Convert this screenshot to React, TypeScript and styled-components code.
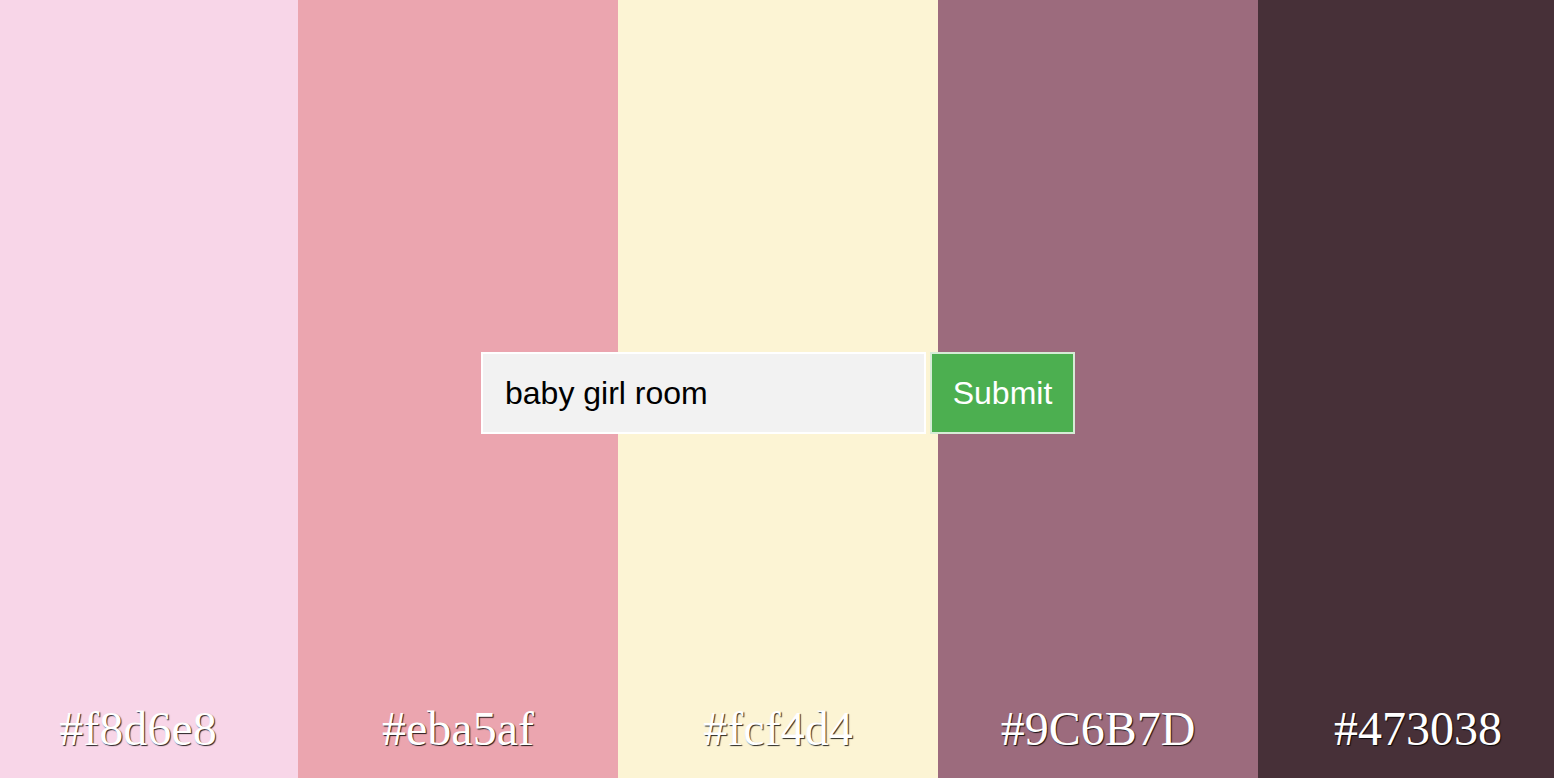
import React from "react";
import styled, { createGlobalStyle } from "styled-components";

const GlobalStyle = createGlobalStyle`
  html, body {
    margin: 0;
    padding: 0;
    overflow: hidden;
  }
  * { box-sizing: border-box; }
`;

const Page = styled.div`
  position: relative;
  width: 100vw;
  height: 100vh;
  overflow: hidden;
`;

const Palette = styled.div`
  display: flex;
  width: 1600px;
  height: 100%;
  margin-left: -22px;
`;

const Swatch = styled.div<{ $bg: string }>`
  flex: 0 0 320px;
  height: 100%;
  background: ${(p) => p.$bg};
  display: flex;
  flex-direction: column;
  justify-content: flex-end;
  align-items: center;
  padding-bottom: 22px;
`;

const Code = styled.span`
  font-family: "Liberation Serif", "Times New Roman", serif;
  font-size: 48px;
  color: #ffffff;
  text-shadow: 1px 1px 1px rgba(0, 0, 0, 0.85);
`;

const Overlay = styled.div`
  position: absolute;
  inset: 0;
  display: flex;
  justify-content: center;
  align-items: center;
  padding-top: 8px;
  padding-left: 2px;
  pointer-events: none;
`;

const SearchForm = styled.form`
  display: flex;
  gap: 4px;
  pointer-events: auto;
`;

const Input = styled.input`
  width: 445px;
  height: 82px;
  padding: 0 22px;
  border: 2px solid #ffffff;
  background: #f2f2f2;
  color: #000000;
  font-family: "Liberation Sans", Arial, sans-serif;
  font-size: 32px;
  outline: none;
`;

const Button = styled.button`
  width: 145px;
  height: 82px;
  padding: 0;
  border: 2px solid #d6ecd6;
  background: #4caf50;
  color: #ffffff;
  font-family: "Liberation Sans", Arial, sans-serif;
  font-size: 32px;
  cursor: pointer;
`;

const colors = ["#f8d6e8", "#eba5af", "#fcf4d4", "#9C6B7D", "#473038"];

export default function App() {
  return (
    <>
      <GlobalStyle />
      <Page>
        <Palette>
          {colors.map((c) => (
            <Swatch key={c} $bg={c}>
              <Code>{c}</Code>
            </Swatch>
          ))}
        </Palette>
        <Overlay>
          <SearchForm onSubmit={(e) => e.preventDefault()}>
            <Input type="text" defaultValue="baby girl room" />
            <Button type="submit">Submit</Button>
          </SearchForm>
        </Overlay>
      </Page>
    </>
  );
}
